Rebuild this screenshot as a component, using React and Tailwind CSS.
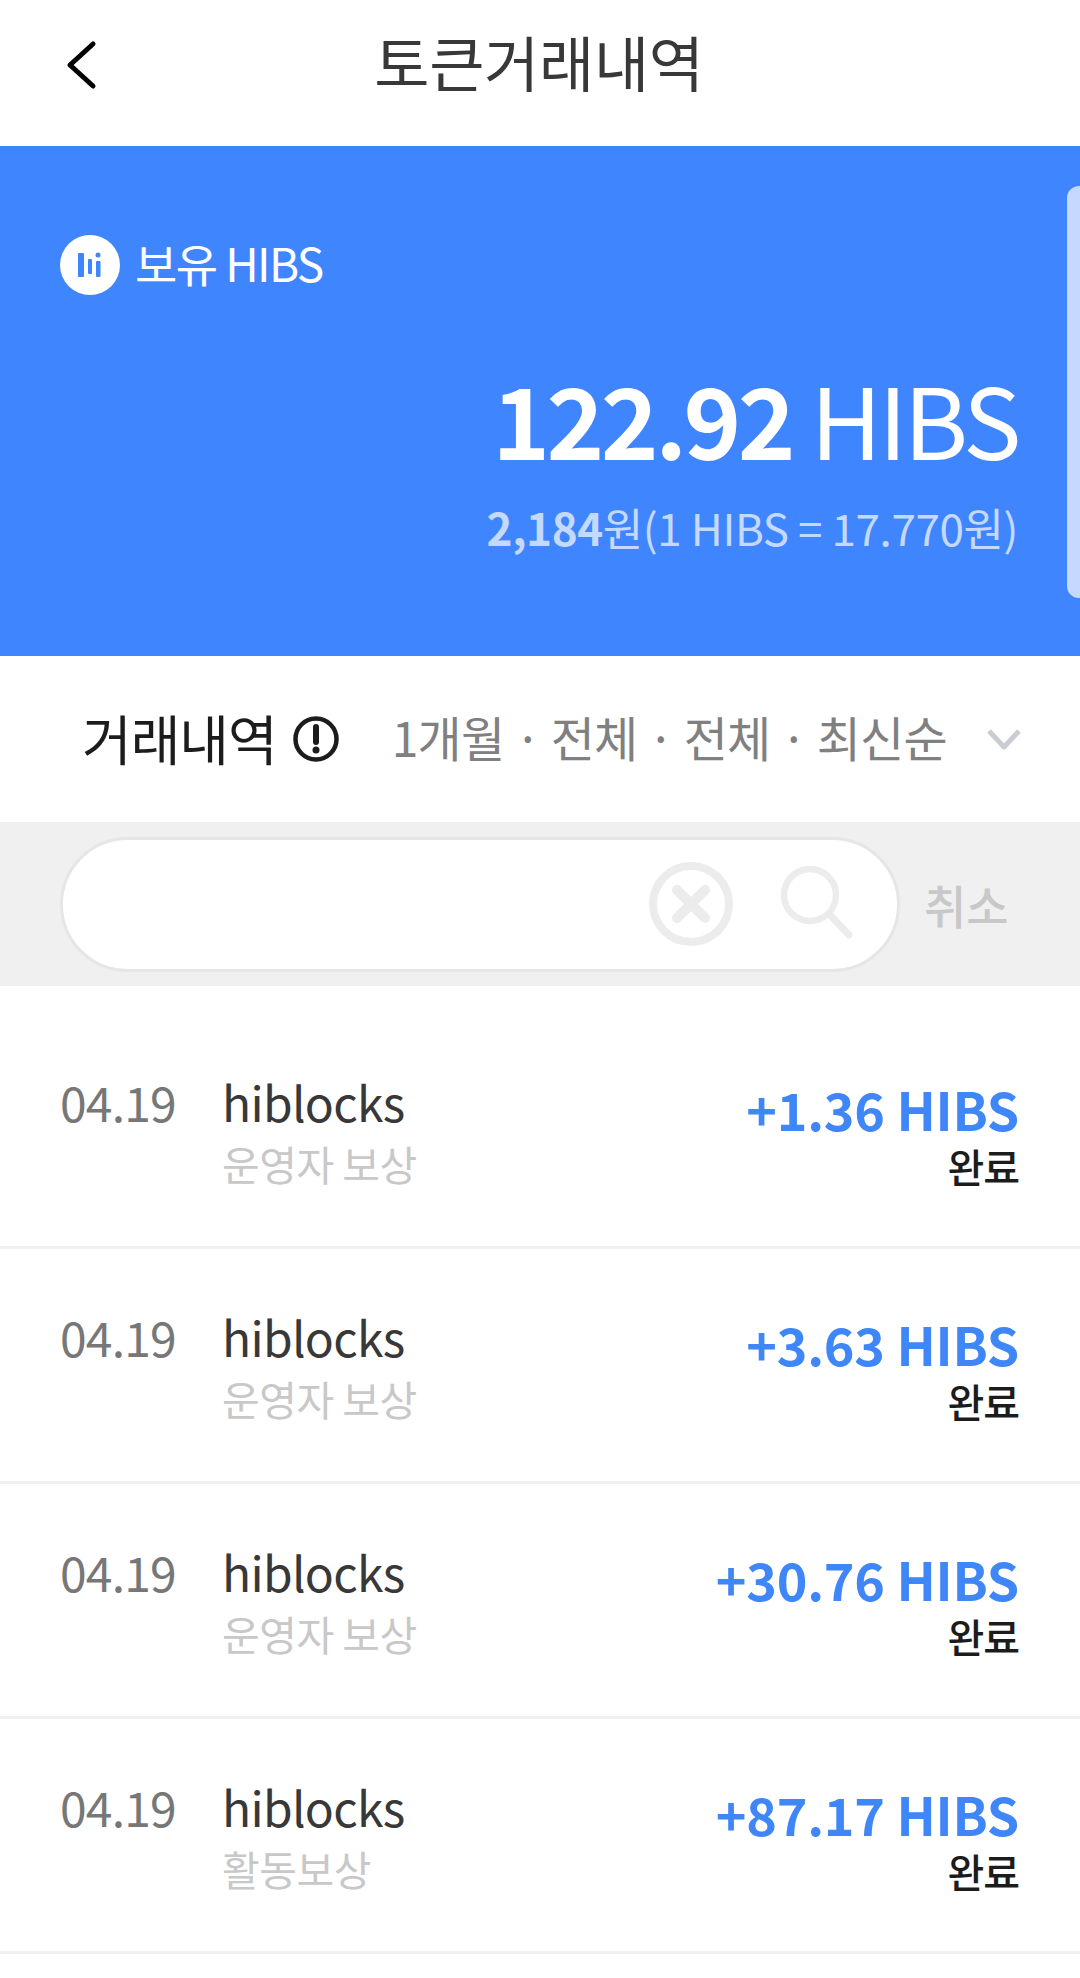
import React from 'react';

const rows = [
  { amount: '+1.36 HIBS', memo: '운영자 보상' },
  { amount: '+3.63 HIBS', memo: '운영자 보상' },
  { amount: '+30.76 HIBS', memo: '운영자 보상' },
  { amount: '+87.17 HIBS', memo: '활동보상' },
];

const font = { fontFamily: '"Noto Sans CJK KR", "Noto Sans", sans-serif' };

const Row = ({ amount, memo }) => (
  <div className="flex h-[235px] justify-between border-b-[3px] border-[#f0f0f0] pl-[60px] pr-[61px] pt-[62px]">
    <div className="flex">
      <div className="w-[162px] text-[48px] leading-[50px] tracking-[-0.8px] text-[#777777]">04.19</div>
      <div>
        <div className="text-[48px] leading-[50px] tracking-[-0.7px] text-[#383838]">hiblocks</div>
        <div className="mt-[14px] text-[41px] leading-[46px] tracking-[-0.5px] text-[#c8c8c8]">{memo}</div>
      </div>
    </div>
    <div className="pt-[7px] text-right">
      <div className="text-[52px] font-bold leading-[52px] tracking-[-0.2px] text-[#3f86f8]">{amount}</div>
      <div className="mt-[9px] text-[40px] font-medium leading-[44px] tracking-[-1px] text-[#1c1c1c]">완료</div>
    </div>
  </div>
);

const App = () => {
  return (
    <div className="h-[1978px] w-[1080px] overflow-hidden bg-white" style={font}>
      <div className="relative flex h-[146px] items-center justify-center">
        <svg className="absolute left-[64px] top-[40px]" width="34" height="50" viewBox="0 0 34 50" fill="none">
          <path d="M29 4 L6 25 L29 46" stroke="#000" strokeWidth="5" strokeLinecap="round" strokeLinejoin="round" />
        </svg>
        <div className="mt-[-24px] pr-[2px] text-[60px] leading-[70px] tracking-[-0.3px] text-[#383838]">토큰거래내역</div>
      </div>

      <div className="relative h-[510px] bg-[#3f86fe] pl-[60px] pr-[62px]">
        <div className="absolute right-0 top-[40px] h-[412px] w-[13px] rounded-l-[12px] bg-[#c5d9ff]" />
        <div className="flex items-center gap-[15px] pt-[86px]">
          <svg width="60" height="60" viewBox="0 0 60 60">
            <circle cx="30" cy="30" r="30" fill="#fff" />
            <rect x="18" y="18" width="6" height="24" rx="1" fill="#3f86fe" />
            <rect x="28" y="24" width="4" height="15" rx="1" fill="#3f86fe" />
            <circle cx="38" cy="20" r="2.5" fill="#3f86fe" />
            <rect x="36" y="26" width="4.5" height="16" rx="1" fill="#3f86fe" />
          </svg>
          <div className="mb-[5px] text-[46px] leading-[60px] tracking-[-1.6px] text-white">보유 HIBS</div>
        </div>
        <div className="mt-[60px] text-right text-[98px] leading-[120px] tracking-[-3.5px] text-white">
          <span className="font-bold">122.92</span> <span className="font-normal">HIBS</span>
        </div>
        <div className="mt-[22px] text-right text-[44px] leading-[56px] tracking-[-0.4px] text-[#c5d9ff]">
          <span className="font-bold">2,184</span>원(1 HIBS = 17.770원)
        </div>
      </div>

      <div className="flex h-[166px] items-center pl-[82px] pr-[58px]">
        <div className="mb-[3px] text-[54px] leading-[60px] tracking-[-1px] text-[#1c1c1c]">거래내역</div>
        <svg className="ml-[16px]" width="46" height="46" viewBox="0 0 46 46" fill="none">
          <circle cx="23" cy="23" r="20.5" stroke="#1c1c1c" strokeWidth="4.5" />
          <path d="M23 11 V26" stroke="#1c1c1c" strokeWidth="6" strokeLinecap="round" />
          <circle cx="23" cy="34" r="3.5" fill="#1c1c1c" />
        </svg>
        <div className="mb-[6px] ml-[53px] flex-1 whitespace-nowrap text-[48px] leading-[60px] tracking-[-0.75px] text-[#808080]">1개월 · 전체 · 전체 · 최신순</div>
        <svg width="36" height="24" viewBox="0 0 36 24" fill="none">
          <path d="M3 4 L18 20 L33 4" stroke="#c9ccd2" strokeWidth="5" strokeLinejoin="round" />
        </svg>
      </div>

      <div className="flex h-[164px] items-center bg-[#f0f0f0] pl-[60px]">
        <div className="flex h-[135px] w-[840px] items-center justify-end rounded-full border-[3px] border-[#e6e6e6] bg-white pr-[44px]">
          <svg width="84" height="84" viewBox="0 0 84 84" fill="none">
            <circle cx="42" cy="42" r="38" stroke="#ececec" strokeWidth="8" />
            <path d="M28 28 L56 56 M56 28 L28 56" stroke="#ececec" strokeWidth="10" strokeLinecap="round" />
          </svg>
          <svg className="ml-[48px]" width="72" height="76" viewBox="0 0 72 76" fill="none">
            <circle cx="29" cy="29" r="26" stroke="#ececec" strokeWidth="6.5" />
            <path d="M49 49 L68 69" stroke="#ececec" strokeWidth="7" strokeLinecap="round" />
          </svg>
        </div>
        <div className="ml-[24px] text-[46px] font-medium leading-[60px] text-[#c8c8c8]">취소</div>
      </div>

      <div className="pt-[28px]">
        {rows.map((r, i) => (
          <Row key={i} amount={r.amount} memo={r.memo} />
        ))}
      </div>
    </div>
  );
};

export default App;
